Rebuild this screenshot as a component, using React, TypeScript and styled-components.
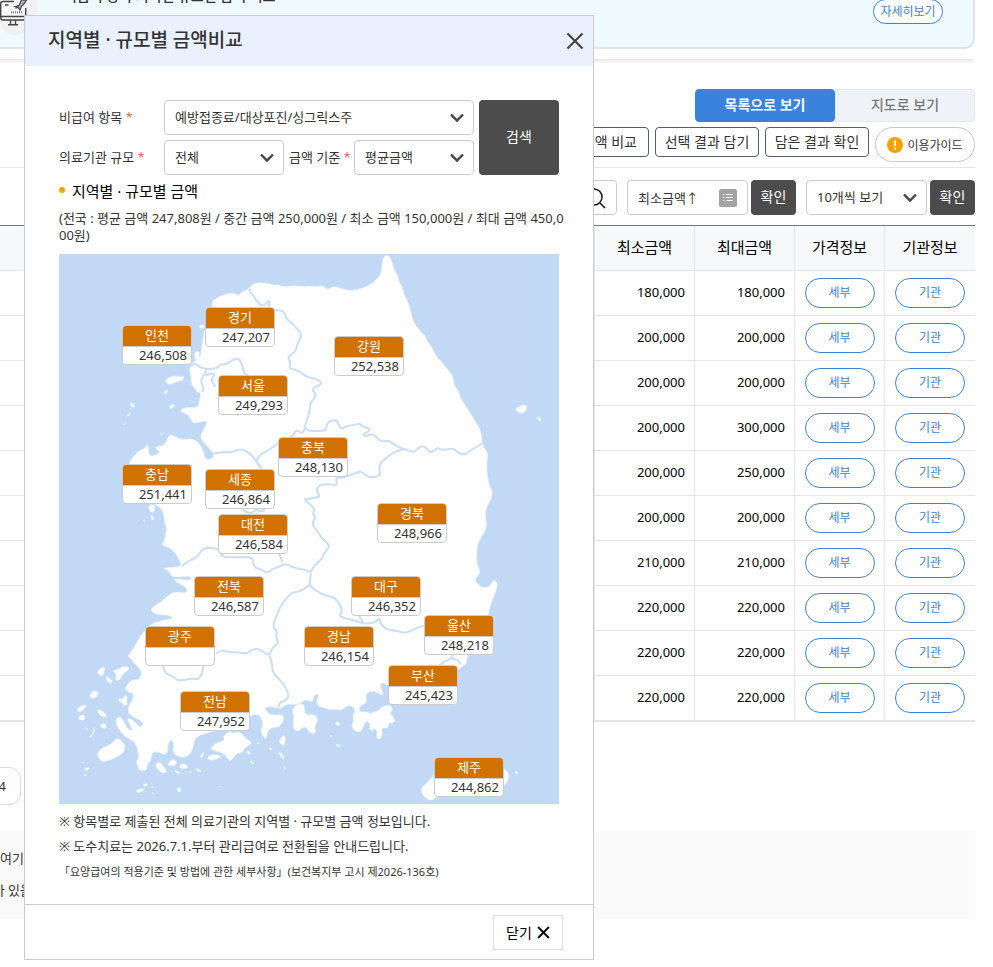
import React from "react";
import styled, { createGlobalStyle, css } from "styled-components";

const GlobalStyle = createGlobalStyle`
  *, *::before, *::after { box-sizing: border-box; }
  body { margin: 0; background: #fff; }
  body, button, input, select {
    font-family: "Noto Sans", "Noto Sans CJK KR", sans-serif;
    font-size: 13px;
    font-weight: 400;
    color: #333;
  }
  button, select { cursor: pointer; }
  h1, h2, p, ul { margin: 0; padding: 0; }
`;

/* ---------- page behind the dialog ---------- */

const Page = styled.div`
  position: relative;
  min-height: 100vh;
  overflow: hidden;
`;

const Content = styled.main`
  margin-right: 18px;
`;

const Banner = styled.section`
  display: flex;
  justify-content: space-between;
  align-items: flex-start;
  height: 49px;
  padding-right: 30px;
  background: #effaff;
  border: 2px solid #dbe5ee;
  border-width: 0 2px 2px 0;
  border-bottom-right-radius: 10px;
`;

const BannerLead = styled.div`
  display: flex;
  align-items: flex-start;
  gap: 26px;
`;

const Badge = styled.div`
  width: 38px;
  height: 35px;
  background: #f1f1f1;
  border-radius: 0 0 30px 20px;
`;

const BannerText = styled.p`
  margin-top: -15px;
  font-size: 14px;
  line-height: 22px;
  font-weight: 500;
`;

const PillLink = styled.a`
  display: flex;
  align-items: center;
  justify-content: center;
  width: 70px;
  height: 25px;
  margin-top: -1px;
  padding-bottom: 2px;
  border: 1px solid #3a82db;
  border-radius: 13px;
  background: #fff;
  color: #3a82db;
  font-size: 12px;
  text-decoration: none;
`;

const SectionShade = styled.div`
  height: 5px;
  margin-top: 10px;
  border-top-right-radius: 10px;
  background: linear-gradient(#e6e6e6, #fff);
`;

const Tabs = styled.div`
  display: flex;
  justify-content: flex-end;
  margin-top: 25px;
`;

const Tab = styled.button<{ $on?: boolean }>`
  width: 140px;
  height: 33px;
  padding: 0 0 4px;
  border: 1px solid ${(p) => (p.$on ? "#3a82db" : "#e2e9ef")};
  border-radius: ${(p) => (p.$on ? "4px" : "0 4px 4px 0")};
  background: ${(p) => (p.$on ? "#3a82db" : "#eff3f8")};
  color: ${(p) => (p.$on ? "#fff" : "#777")};
  font-size: 14px;
  font-weight: ${(p) => (p.$on ? 700 : 500)};
`;

const Actions = styled.div`
  display: flex;
  justify-content: flex-end;
  gap: 6px;
  height: 46px;
  padding-top: 5px;
  border-bottom: 1px solid #e5e5e5;
`;

const ActionButton = styled.button<{ $auto?: boolean }>`
  width: ${(p) => (p.$auto ? "auto" : "104px")};
  height: 30px;
  padding: ${(p) => (p.$auto ? "0 11px 2px" : "0 0 2px")};
  border: 1px solid #555d6b;
  border-radius: 4px;
  background: #fff;
  font-size: 14px;
  white-space: nowrap;
`;

const GuideButton = styled.button`
  display: flex;
  align-items: center;
  justify-content: center;
  gap: 4px;
  width: 100px;
  height: 35px;
  padding: 0;
  border: 1px solid #c8c8c8;
  border-radius: 18px;
  background: #fff;
  font-size: 12px;
`;

const Filters = styled.div`
  display: flex;
  justify-content: flex-end;
  gap: 10px;
  padding: 12px 0 10px;
`;

const FilterGroup = styled.div`
  display: flex;
  gap: 3px;
`;

const SearchBox = styled.label`
  display: flex;
  align-items: center;
  width: 200px;
  height: 35px;
  padding-right: 10px;
  border: 1px solid #ccc;
  border-radius: 4px;
  input { flex: 1; min-width: 0; border: 0; outline: 0; background: none; }
`;

const boxed = css`
  height: 35px;
  border: 1px solid #ccc;
  border-radius: 4px;
  background: #fff;
`;

const SortButton = styled.button`
  ${boxed}
  display: flex;
  align-items: center;
  justify-content: space-between;
  width: 121px;
  padding: 0 10px;
`;

const DarkButton = styled.button<{ $tall?: boolean }>`
  width: ${(p) => (p.$tall ? "80px" : "45px")};
  height: ${(p) => (p.$tall ? "75px" : "35px")};
  padding: 0 0 3px;
  border: 0;
  border-radius: 4px;
  background: #4c4c4c;
  color: #fff;
  font-size: 14px;
`;

const SelectBox = styled.span<{ $w: number }>`
  position: relative;
  display: block;
  width: ${(p) => p.$w}px;
  select {
    ${boxed}
    display: block;
    width: 100%;
    padding: 0 30px 2px 10px;
    appearance: none;
  }
  svg { position: absolute; right: 10px; top: 13px; pointer-events: none; }
`;

const Table = styled.table`
  width: 100%;
  table-layout: fixed;
  border-collapse: separate;
  border-spacing: 0;
  border-top: 1px solid #77787c;
  border-bottom: 1px solid #e5e5e5;
  color: #000;
  th, td {
    height: 45px;
    padding: 0;
    border-bottom: 1px solid #e5e5e5;
    border-right: 1px solid #e5e5e5;
  }
  th:last-child, td:last-child { border-right: 0; }
  th { padding-bottom: 4px; background: #f7f8fa; font-size: 15px; font-weight: 400; }
  td { text-align: center; }
`;

const Amount = styled.td`
  && { text-align: right; padding: 0 9px 2px 0; }
`;

const RowButton = styled.button`
  width: 70px;
  height: 30px;
  padding: 0 0 2px;
  border: 1px solid #3a82db;
  border-radius: 15px;
  background: #fff;
  color: #3a82db;
  font-size: 12px;
`;

const Pager = styled.nav`
  display: flex;
  margin: 45px 0 26px;
`;

const PagerLink = styled.a`
  display: flex;
  align-items: center;
  justify-content: flex-end;
  width: 21px;
  height: 38px;
  padding-right: 14px;
  border: 1px solid #ddd;
  border-left: 0;
  border-radius: 0 12px 12px 0;
  color: #333;
  text-decoration: none;
`;

const GuideBox = styled.section`
  height: 88px;
  padding-top: 11px;
  background: #fafafa;
`;

const GuideLine = styled.p<{ $w: number }>`
  display: flex;
  justify-content: flex-end;
  width: ${(p) => p.$w}px;
  line-height: 32px;
  white-space: nowrap;
`;

/* ---------- dialog ---------- */

const Dialog = styled.div`
  position: absolute;
  left: 24px;
  top: 15px;
  width: min(570px, calc(100% - 48px));
  border: 1px solid #ccc;
  background: #fff;
`;

const DialogHead = styled.header`
  display: flex;
  align-items: center;
  justify-content: space-between;
  height: 50px;
  padding: 0 9px 0 23px;
  background: #eaf1fe;
  h1 { font-size: 19px; line-height: 48px; height: 50px; font-weight: 500; }
`;

const IconButton = styled.button`
  display: flex;
  padding: 0;
  border: 0;
  background: none;
`;

const DialogBody = styled.div`
  padding: 34px 34px 20px;
`;

const SearchForm = styled.form`
  display: flex;
  gap: 5px;
`;

const Fields = styled.div`
  display: grid;
  grid-template-columns: 105px 120px 70px 120px;
  row-gap: 5px;
  align-items: center;
  label { display: block; white-space: nowrap; padding-bottom: 2px; }
  label i { color: #e02b2b; font-style: normal; font-weight: 300; }
`;

const Spread = styled.div`
  grid-column: 2 / -1;
`;

const MidLabel = styled.div`
  padding-left: 5px;
`;

const SubHead = styled.h2`
  display: flex;
  gap: 7px;
  height: 33px;
  color: #000;
  font-size: 15px;
  line-height: 33px;
  font-weight: 400;
  &::before {
    content: "";
    width: 6px;
    height: 6px;
    margin-top: 12px;
    border-radius: 50%;
    background: #ff9f00;
  }
`;

const Summary = styled.p`
  margin: 2px -9px 10px 0;
  line-height: 17px;
  word-break: break-all;
`;

const MapArea = styled.div`
  position: relative;
  width: 500px;
  height: 550px;
  background: #c2d9f5;
  > svg { display: block; }
`;

const Pin = styled.dl<{ $x: number; $y: number }>`
  position: absolute;
  left: ${(p) => p.$x}px;
  top: ${(p) => p.$y}px;
  width: 70px;
  height: 40px;
  margin: 0;
  border: 1px solid #ccc;
  border-radius: 4px;
  background: #fff;
  overflow: hidden;
  dt {
    height: 21px;
    border-bottom: 1px solid #ccc;
    background: #d17100;
    color: #fff;
    line-height: 18px;
    text-align: center;
  }
  dd { margin: 0; padding-right: 4px; line-height: 16px; text-align: right; }
`;

const Notes = styled.ul`
  margin-top: 5px;
  list-style: none;
  line-height: 25px;
`;

const SmallNote = styled.li`
  font-size: 11px;
`;

const DialogFoot = styled.footer`
  display: flex;
  justify-content: flex-end;
  padding: 10px 30px 9px;
  border-top: 1px solid #ccc;
`;

const CloseButton = styled.button`
  display: flex;
  align-items: center;
  justify-content: center;
  gap: 5px;
  width: 70px;
  height: 35px;
  padding: 0;
  border: 1px solid #e1e1e1;
  background: #fff;
  color: #000;
  font-size: 14px;
  span { padding-bottom: 2px; }
`;

/* ---------- icons ---------- */

const Chevron = () => (
  <svg width="14" height="10" viewBox="0 0 14 10" fill="none" stroke="#444" strokeWidth="2.4" aria-hidden="true">
    <path d="M1 1.5l6 6 6-6" />
  </svg>
);

const Cross = ({ size, width, color }: { size: number; width: number; color: string }) => (
  <svg width={size} height={size} viewBox="0 0 18 18" stroke={color} strokeWidth={width} aria-hidden="true">
    <path d="M1.5 1.5l15 15M16.5 1.5l-15 15" />
  </svg>
);

const MonitorIcon = () => (
  <svg width="30" height="27" viewBox="0 0 30 27" fill="none" stroke="#444" strokeWidth="1.4" aria-hidden="true">
    <path d="M14 1.500H3Q0.700 1.500 0.700 4v13.500q0 2.500 2.500 2.500h20q2.500 0 2.500-2.500V8" fill="#f7f7f7" />
    <path d="M1 16.500h24M10.500 20.500v3.500M15.500 20.500v3.500M8 24.700h10M5 5h3.500" />
    <path d="M11 12.300h11" strokeWidth="2" strokeDasharray="1 1" stroke="#777" />
    <path d="M15 6.500l4-1 2.500-5.500h5l-3 4.500-2 1.500-1.500 4-2-2.500z" fill="#9db6c8" strokeWidth="1.200" />
    <path d="M15.500 8.500l3-2" />
  </svg>
);

const SearchIcon = () => (
  <svg width="22" height="22" viewBox="0 0 22 22" fill="none" stroke="#111" strokeWidth="1.500" aria-hidden="true">
    <circle cx="10" cy="10" r="8" />
    <path d="M16 16l5 5" />
  </svg>
);

const ListIcon = () => (
  <svg width="18" height="18" viewBox="0 0 18 18" aria-hidden="true">
    <rect width="18" height="18" rx="2" fill="#a3a3a3" />
    <path d="M4 5.500h1.500M4 8.500h1.500M4 11.500h1.500M7 5.500h7M7 8.500h7M7 11.500h7" stroke="#fff" strokeWidth="1" />
  </svg>
);

const AlertIcon = () => (
  <svg width="16" height="16" viewBox="0 0 16 16" aria-hidden="true">
    <circle cx="8" cy="8" r="8" fill="#ffa000" />
    <path d="M8 3.500v5.500M8 10.500v2" stroke="#fff" strokeWidth="2" />
  </svg>
);

/* ---------- map drawing, three units to a pixel ---------- */

const LAND =
  "575,98 585,88 600,86 630,88 645,94 660,92 675,98 690,96 715,95 735,98 750,96 772,98 785,94 795,98 805,106 815,103 820,98 835,99 855,106 875,110 890,108 905,104 930,94 950,80 966,60 969,40 970,20 976,6 985,3 992,8 1000,25 1005,47 1017,65 1018,80 1030,97 1034,120 1045,140 1054,165 1060,195 1070,213 1080,228 1098,244 1103,260 1120,280 1128,302 1145,320 1160,338 1185,372 1183,390 1200,412 1205,435 1225,462 1236,480 1250,505 1267,530 1268,562 1274,578 1288,602 1283,622 1284,660 1290,690 1301,715 1297,735 1285,755 1278,775 1282,800 1282,825 1270,845 1260,860 1254,880 1252,928 1262,945 1262,960 1247,975 1255,992 1275,1003 1292,997 1304,977 1315,985 1315,1000 1305,1025 1297,1045 1290,1075 1284,1100 1270,1130 1240,1180 1225,1203 1222,1233 1210,1236 1200,1247 1180,1250 1130,1290 1060,1310 995,1300 985,1292 972,1285 962,1292 967,1305 975,1325 960,1320 945,1310 925,1315 920,1328 925,1345 910,1352 900,1358 902,1375 925,1373 937,1380 930,1395 918,1405 910,1425 902,1435 885,1430 877,1415 885,1400 880,1385 890,1372 880,1355 862,1355 848,1370 830,1365 810,1367 790,1360 775,1355 772,1340 780,1325 775,1318 765,1325 760,1345 750,1340 735,1338 722,1350 705,1352 685,1350 668,1360 665,1365 640,1358 620,1358 618,1366 630,1380 645,1383 665,1382 675,1385 672,1405 660,1420 640,1420 625,1430 622,1460 610,1445 605,1425 612,1412 608,1395 600,1382 575,1382 540,1420 470,1430 440,1438 415,1447 405,1460 402,1482 393,1502 375,1512 345,1503 342,1485 345,1468 336,1455 325,1475 328,1495 315,1502 300,1495 280,1492 276,1518 263,1535 263,1550 240,1550 237,1535 230,1525 242,1510 232,1475 225,1462 203,1452 182,1430 171,1410 172,1390 185,1388 193,1400 200,1415 212,1430 222,1430 208,1405 205,1392 220,1395 240,1420 254,1415 250,1402 225,1390 207,1378 208,1355 220,1342 225,1318 210,1315 197,1305 205,1292 222,1275 235,1280 250,1262 240,1240 225,1228 218,1215 205,1207 215,1197 232,1168 245,1145 256,1132 270,1112 310,1098 340,1095 340,1088 320,1082 290,1082 276,1070 278,1060 310,1042 325,1025 350,1012 375,1018 387,1012 378,998 355,985 340,975 370,976 390,980 400,970 385,967 350,970 335,965 330,950 308,942 340,940 370,935 360,918 348,895 330,880 305,873 318,860 318,840 325,825 315,805 315,780 305,760 250,730 215,650 208,628 225,605 240,590 262,580 263,570 270,578 268,600 280,608 300,597 303,592 290,587 290,576 310,578 325,560 330,540 350,548 370,558 390,553 410,558 425,575 435,595 438,615 455,618 468,600 455,590 440,570 423,553 430,530 444,510 440,500 420,505 400,508 388,480 362,474 370,462 395,460 416,460 420,445 427,415 415,418 410,405 395,390 397,365 388,340 402,325 425,310 427,285 430,260 440,215 450,190 462,170 457,142 480,128 500,120 525,116 540,126 545,115 560,110";

const ISLANDS = [
  "318,378 340,365 365,368 376,366 372,380 350,385 335,391 322,388",
  "318,410 326,406 322,421 316,420",
  "213,448 222,446 229,460 216,460", "329,459 343,449 348,455 337,464",
  "192,512 203,504 202,508 194,513", "203,482 216,475 214,481 206,486",
  "418,214 435,212 436,222 425,226", "405,295 421,290 423,312 410,325",
  "1368,464 1385,456 1402,450 1404,467 1388,480 1375,473", "1434,487 1444,492 1448,501 1437,498",
  "265,753 288,752 286,773 276,778", "275,782 287,790 280,802", "252,798 260,800 256,805",
  "305,538 312,539 308,545",
  "115,1250 138,1235 136,1258 127,1267 115,1257",
  "158,1250 175,1248 190,1237 210,1239 210,1249 195,1255 178,1283 168,1275 174,1261",
  "140,1265 151,1273 162,1283 155,1290 143,1280",
  "91,1325 102,1310 120,1313 112,1330 98,1335",
  "52,1368 65,1355 84,1352 76,1365 60,1375", "55,1390 76,1380 79,1395 66,1401",
  "114,1369 128,1367 144,1385 140,1392 120,1382", "121,1417 135,1405 146,1420 133,1424",
  "180,1331 192,1338 198,1320 206,1330 202,1344 207,1350 196,1356 188,1345 179,1342",
  "106,1415 107,1435 97,1450 90,1450 103,1438", "78,1418 88,1424 84,1429",
  "112,1498 130,1482 155,1472 172,1452 182,1456 201,1475 193,1497 180,1505 150,1520 126,1524",
  "71,1524 76,1524 76,1528 71,1528", "77,1540 93,1541 89,1546 79,1552", "75,1565 84,1559 80,1567",
  "288,1532 300,1522 312,1535 325,1553 316,1559 298,1550",
  "325,1530 340,1513 357,1525 345,1536 330,1535", "361,1533 376,1529 390,1537 378,1545 364,1543",
  "346,1549 360,1553 366,1557 350,1558", "408,1544 420,1545 430,1555 415,1552", "392,1551 399,1555 393,1556",
  "445,1510 455,1502 480,1503 487,1508 470,1518 448,1518",
  "455,1480 475,1465 497,1460 492,1445 505,1440 512,1428 520,1440 535,1433 550,1438 558,1453 574,1460 578,1470 555,1482 548,1500 535,1495 522,1513 513,1522 502,1508 490,1495 462,1490",
  "422,1508 434,1492 432,1505 426,1512",
  "562,1492 570,1490 574,1500 568,1502", "572,1520 579,1520 585,1532 577,1529",
  "660,1459 675,1440 680,1455 675,1478 663,1468", "656,1493 669,1498 677,1516 669,1513",
  "630,1481 640,1483 639,1487 632,1487", "674,1534 680,1544 675,1545", "593,1464 602,1468 596,1470",
  "698,1369 712,1350 735,1348 737,1375 745,1385 760,1380 775,1388 775,1403 766,1418 772,1436 755,1440 742,1420 730,1420 718,1433 704,1428 702,1405 706,1390",
  "922,1400 935,1375 955,1372 965,1362 982,1353 1000,1358 1000,1368 992,1378 1000,1385 1010,1400 998,1410 988,1404 990,1418 978,1425 968,1420 970,1448 960,1457 952,1450 955,1430 945,1422 940,1432 930,1425 935,1412 928,1405",
  "828,1406 838,1403 845,1412 832,1415", "812,1444 820,1445 819,1450", "830,1470 843,1472 846,1478 835,1478",
  "230,1610 245,1603 258,1606 245,1615 232,1616", "251,1589 267,1588 264,1596 254,1596",
  "275,1599 283,1596 282,1602", "279,1610 285,1620 281,1621", "352,1608 362,1598 369,1608 360,1615",
  "480,1597 487,1596 484,1601",
  "1083,1605 1100,1590 1120,1570 1140,1545 1240,1530 1330,1543 1347,1552 1350,1572 1340,1593 1310,1612 1240,1622 1170,1620 1128,1630 1118,1642 1095,1630",
  "1368,1553 1375,1551 1378,1560 1370,1561",
];

const BORDERS = [
  "572,105 572,115 585,125 590,140 600,145 605,155 620,153 625,140 632,142 628,160 640,168 675,170 682,195 697,205 710,220 725,235 727,250 720,258 715,272 710,290 700,300 690,305 688,315 695,325 690,345 705,345 725,355 745,370 765,372 790,385 780,395 765,400 760,410 772,420 765,435 755,445 748,490 735,520 750,532 780,530 800,530 803,510 815,500 835,498 840,515 848,525 865,515 890,513 900,507 915,520 935,525 925,535 912,540 918,548 935,540 950,545 960,558 975,563 990,560 1010,575 1035,585 1050,590 1065,595 1080,580 1095,575 1110,592 1120,595 1135,580 1145,588 1165,587 1180,583 1190,590 1205,600 1220,602 1235,588 1255,578 1270,568",
  "388,342 405,325 420,340 440,343 442,352 430,368 425,385 435,400 430,415 M 440,345 475,345 483,330 500,332 520,318 540,312 552,340 555,360 570,365 M 440,365 450,358 470,360 455,378 470,398",
  "465,598 490,595 520,595 540,585 560,590 580,605 590,620 600,635 612,650 590,620 605,600 630,588 655,570 680,555 705,545 708,530 720,530 728,540 740,520",
  "1035,585 1015,590 995,600 980,615 965,625 960,645 965,660 955,668 935,670 920,665 905,650 890,658 875,662 850,672 830,670 835,695 820,692 800,690 780,695 770,710 785,728 770,730 750,735 735,735 745,745 770,765 760,775 770,790 760,805 765,822 780,835 785,850 805,865 812,880 795,895 790,915 775,925 760,945 755,955 740,948 725,945 700,940 685,930 665,935 655,940 640,945 625,958 605,945 585,940 580,910 550,910 520,910 490,910 480,885 450,880 430,885 415,910 390,920 370,936",
  "755,955 755,975 750,992 770,1010 800,1025 830,1032 845,1055 850,1075 840,1085 855,1092 890,1100 915,1110 950,1105 960,1090 965,1110 985,1128 1010,1130 1040,1138 1065,1125 1095,1115 M 900,1085 915,1110",
  "755,990 735,1005 715,1015 700,1015 670,1045 655,1080 640,1118 655,1130 650,1150 660,1168 640,1180 632,1205 615,1195 600,1185 580,1185 565,1200 540,1195 510,1195 490,1188 470,1200 M 632,1205 640,1230 640,1255 665,1280 680,1300 690,1325 680,1340 662,1345 658,1360",
  "310,1225 315,1258 340,1265 355,1280 380,1278 400,1272 415,1278 430,1260 435,1225",
  "1140,1235 1155,1222 1178,1215 1185,1190 M 1178,1215 1195,1215 1205,1230",
  "550,765 560,775 580,778 590,765 610,775 620,760 M 660,895 670,925 M 745,740 742,745",
];

/* Joins the points of a line by curves through their midpoints. */
function curve(source: string, closed: boolean): string {
  return source
    .split("M")
    .map((part) => {
      const pts = part.trim().split(" ").map((p) => p.split(",").map(Number));
      const mid = (a: number[], b: number[]) => `${(a[0] + b[0]) / 2} ${(a[1] + b[1]) / 2}`;
      if (closed) {
        const n = pts.length;
        const arcs = pts.map((p, i) => `Q${p[0]} ${p[1]} ${mid(p, pts[(i + 1) % n])}`);
        return `M${mid(pts[n - 1], pts[0])}${arcs.join("")}Z`;
      }
      const last = pts[pts.length - 1];
      const arcs = pts.slice(1, -1).map((p, i) => `Q${p[0]} ${p[1]} ${mid(p, pts[i + 2])}`);
      return `M${pts[0][0]} ${pts[0][1]}${arcs.join("")}L${last[0]} ${last[1]}`;
    })
    .join("");
}

const KoreaMap = () => (
  <svg width="100%" height="100%" viewBox="0 0 1500 1650" role="img" aria-label="대한민국 지도">
    <g fill="#fff" stroke="#e3eefb" strokeWidth="2">
      <path d={curve(LAND, true)} />
      {ISLANDS.map((d) => (
        <path key={d} d={curve(d, true)} />
      ))}
    </g>
    <g fill="none" stroke="#c9def7" strokeWidth="6" strokeLinejoin="round">
      {BORDERS.map((d) => (
        <path key={d} d={curve(d, false)} />
      ))}
    </g>
  </svg>
);

/* ---------- data ---------- */

const REGIONS: [string, string, number, number][] = [
  ["경기", "247,207", 146, 53],
  ["인천", "246,508", 63, 71],
  ["강원", "252,538", 275, 82],
  ["서울", "249,293", 159, 121],
  ["충북", "248,130", 219, 183],
  ["충남", "251,441", 63, 210],
  ["세종", "246,864", 146, 215],
  ["대전", "246,584", 159, 260],
  ["경북", "248,966", 318, 249],
  ["전북", "246,587", 135, 322],
  ["대구", "246,352", 292, 322],
  ["울산", "248,218", 365, 361],
  ["광주", "", 86, 372],
  ["경남", "246,154", 245, 372],
  ["부산", "245,423", 329, 411],
  ["전남", "247,952", 121, 437],
  ["제주", "244,862", 375, 503],
];

const ROWS = [
  ["180,000", "180,000"],
  ["200,000", "200,000"],
  ["200,000", "200,000"],
  ["200,000", "300,000"],
  ["200,000", "250,000"],
  ["200,000", "200,000"],
  ["210,000", "210,000"],
  ["220,000", "220,000"],
  ["220,000", "220,000"],
  ["220,000", "220,000"],
];

export default function App() {
  return (
    <Page>
      <GlobalStyle />
      <Content>
        <Banner>
          <BannerLead>
            <Badge>
              <MonitorIcon />
            </Badge>
            <BannerText>비급여 항목 지역별 규모별 금액 비교</BannerText>
          </BannerLead>
          <PillLink href="#detail">자세히보기</PillLink>
        </Banner>
        <SectionShade />
        <Tabs>
          <Tab type="button" $on>목록으로 보기</Tab>
          <Tab type="button">지도로 보기</Tab>
        </Tabs>
        <Actions>
          <ActionButton type="button" $auto>규모별 금액 비교</ActionButton>
          <ActionButton type="button">선택 결과 담기</ActionButton>
          <ActionButton type="button">담은 결과 확인</ActionButton>
          <GuideButton type="button">
            <AlertIcon />
            이용가이드
          </GuideButton>
        </Actions>
        <Filters>
          <SearchBox>
            <input type="text" aria-label="검색어" />
            <SearchIcon />
          </SearchBox>
          <FilterGroup>
            <SortButton type="button">
              최소금액↑
              <ListIcon />
            </SortButton>
            <DarkButton type="button">확인</DarkButton>
          </FilterGroup>
          <FilterGroup>
            <SelectBox $w={121}>
              <select aria-label="보기 개수">
                <option>10개씩 보기</option>
              </select>
              <Chevron />
            </SelectBox>
            <DarkButton type="button">확인</DarkButton>
          </FilterGroup>
        </Filters>
        <Table>
          <colgroup>
            <col />
            <col width="100" />
            <col width="100" />
            <col width="90" />
            <col width="90" />
          </colgroup>
          <thead>
            <tr>
              <th />
              <th scope="col">최소금액</th>
              <th scope="col">최대금액</th>
              <th scope="col">가격정보</th>
              <th scope="col">기관정보</th>
            </tr>
          </thead>
          <tbody>
            {ROWS.map(([min, max], i) => (
              <tr key={i}>
                <td />
                <Amount>{min}</Amount>
                <Amount>{max}</Amount>
                <td>
                  <RowButton type="button">세부</RowButton>
                </td>
                <td>
                  <RowButton type="button">기관</RowButton>
                </td>
              </tr>
            ))}
          </tbody>
        </Table>
        <Pager aria-label="페이지">
          <PagerLink href="#page4">4</PagerLink>
        </Pager>
        <GuideBox>
          <GuideLine $w={24}>여기</GuideLine>
          <GuideLine $w={32}>가 있을</GuideLine>
        </GuideBox>
      </Content>

      <Dialog role="dialog" aria-labelledby="dialog-title">
        <DialogHead>
          <h1 id="dialog-title">지역별 · 규모별 금액비교</h1>
          <IconButton type="button" aria-label="닫기">
            <Cross size={18} width={2.2} color="#444" />
          </IconButton>
        </DialogHead>
        <DialogBody>
          <SearchForm onSubmit={(e) => e.preventDefault()}>
            <Fields>
              <label htmlFor="item">비급여 항목 <i>*</i></label>
              <Spread>
                <SelectBox $w={310}>
                  <select id="item">
                    <option>예방접종료/대상포진/싱그릭스주</option>
                  </select>
                  <Chevron />
                </SelectBox>
              </Spread>
              <label htmlFor="size">의료기관 규모 <i>*</i></label>
              <SelectBox $w={120}>
                <select id="size">
                  <option>전체</option>
                </select>
                <Chevron />
              </SelectBox>
              <MidLabel>
                <label htmlFor="basis">금액 기준 <i>*</i></label>
              </MidLabel>
              <SelectBox $w={120}>
                <select id="basis">
                  <option>평균금액</option>
                </select>
                <Chevron />
              </SelectBox>
            </Fields>
            <DarkButton type="submit" $tall>검색</DarkButton>
          </SearchForm>
          <SubHead>지역별 · 규모별 금액</SubHead>
          <Summary>
            (전국 : 평균 금액 247,808원 / 중간 금액 250,000원 / 최소 금액 150,000원 / 최대 금액 450,000원)
          </Summary>
          <MapArea>
            <KoreaMap />
            {REGIONS.map(([name, price, x, y]) => (
              <Pin key={name} $x={x} $y={y}>
                <dt>{name}</dt>
                <dd>{price}</dd>
              </Pin>
            ))}
          </MapArea>
          <Notes>
            <li>※ 항목별로 제출된 전체 의료기관의 지역별 · 규모별 금액 정보입니다.</li>
            <li>※ 도수치료는 2026.7.1.부터 관리급여로 전환됨을 안내드립니다.</li>
            <SmallNote>「요양급여의 적용기준 및 방법에 관한 세부사항」(보건복지부 고시 제2026-136호)</SmallNote>
          </Notes>
        </DialogBody>
        <DialogFoot>
          <CloseButton type="button">
            <span>닫기</span>
            <Cross size={13} width={2.800} color="#111" />
          </CloseButton>
        </DialogFoot>
      </Dialog>
    </Page>
  );
}
